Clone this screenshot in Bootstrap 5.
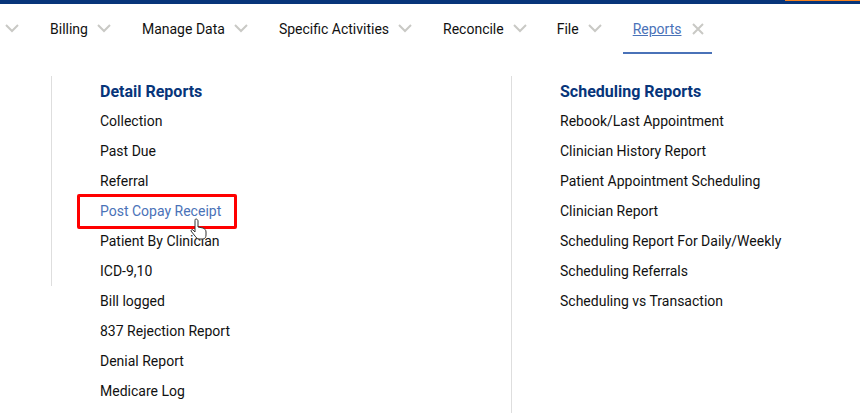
<!DOCTYPE html>
<html lang="en"><head><meta charset="utf-8">
<link href="https://cdn.jsdelivr.net/npm/bootstrap@5.3.0/dist/css/bootstrap.min.css" rel="stylesheet">
<style>
html,body{height:413px;overflow:hidden;background:#fff}
body{font-family:Roboto,"Liberation Sans",sans-serif;font-size:14px;color:#111}
.topstrip{height:4px;background:#07357a;position:relative}
.topaccent{position:absolute;right:0;top:0;width:75px;height:1px;background:#f58220}
.menubar{height:49px;padding-left:5px}
.menuitem{height:49px;color:#111;text-decoration:none;font-size:14px;line-height:20px;padding-top:15px;gap:9px}
.menuitem.first{margin-right:31px}
.mi-1{margin-right:31px}.mi-2{margin-right:31px}.mi-3{margin-right:31px}.mi-4{margin-right:30px}.mi-5{margin-right:31px}
.menuitem.active{color:#4a72b8;text-decoration:underline;border-bottom:2px solid #4a72b8;height:50px;padding-left:10px;padding-right:8px;margin-left:-10px;gap:11px}
.chev{width:14px;height:9px;flex:none;margin-top:5px}
.closex{width:12px;height:12px;flex:none;margin-top:4px}
.colA{width:411px;margin-left:48px;flex:none}
.colB{flex:none;width:300px;margin-left:48px}
.divA{border-left:1px solid #dedede;height:210px;margin-top:23px;margin-left:51px;flex:none;width:1px}
.divB{border-left:1px solid #dedede;height:337px;margin-top:23px;flex:none;width:1px}
.heading{font-size:16px;font-weight:700;color:#07357a;line-height:20px;margin:0 0 4px;padding-top:29px}
.rlist{list-style:none;margin:0;padding:0}
.rlist li{height:30px;line-height:30px;white-space:nowrap;font-size:14px;color:#111}
.rlist .hot{color:#4a72b8}
.hilite{position:absolute;left:77px;top:141px;width:160px;height:35px;border:3px solid #f00;border-radius:2px}
.cursor{position:absolute;left:190px;top:165px;width:18px;height:22px}
</style></head><body>
<div class="topstrip"><div class="topaccent"></div></div>
<nav class="menubar d-flex">
<a class="menuitem first d-flex" href="#"><svg class="chev" viewBox="0 0 14 9"><path d="M1 1l6 6 6-6" fill="none" stroke="#c9c9c5" stroke-width="2"/></svg></a>
<a class="menuitem mi-1 d-flex" href="#">Billing<svg class="chev" viewBox="0 0 14 9"><path d="M1 1l6 6 6-6" fill="none" stroke="#c9c9c5" stroke-width="2"/></svg></a>
<a class="menuitem mi-2 d-flex" href="#">Manage Data<svg class="chev" viewBox="0 0 14 9"><path d="M1 1l6 6 6-6" fill="none" stroke="#c9c9c5" stroke-width="2"/></svg></a>
<a class="menuitem mi-3 d-flex" href="#">Specific Activities<svg class="chev" viewBox="0 0 14 9"><path d="M1 1l6 6 6-6" fill="none" stroke="#c9c9c5" stroke-width="2"/></svg></a>
<a class="menuitem mi-4 d-flex" href="#">Reconcile<svg class="chev" viewBox="0 0 14 9"><path d="M1 1l6 6 6-6" fill="none" stroke="#c9c9c5" stroke-width="2"/></svg></a>
<a class="menuitem mi-5 d-flex" href="#">File<svg class="chev" viewBox="0 0 14 9"><path d="M1 1l6 6 6-6" fill="none" stroke="#c9c9c5" stroke-width="2"/></svg></a>
<a class="menuitem active d-flex align-self-start" href="#">Reports<svg class="closex" viewBox="0 0 12 12"><path d="M1 1l10 10M11 1L1 11" fill="none" stroke="#c9c9c5" stroke-width="2"/></svg></a>
</nav>
<div class="position-relative d-flex">
<div class="divA"></div>
<div class="colA">
<h2 class="heading">Detail Reports</h2>
<ul class="rlist">
<li>Collection</li><li>Past Due</li><li>Referral</li><li class="hot">Post Copay Receipt</li><li>Patient By Clinician</li><li>ICD-9,10</li><li>Bill logged</li><li>837 Rejection Report</li><li>Denial Report</li><li>Medicare Log</li>
</ul></div>
<div class="divB"></div>
<div class="colB">
<h2 class="heading">Scheduling Reports</h2>
<ul class="rlist">
<li>Rebook/Last Appointment</li><li>Clinician History Report</li><li>Patient Appointment Scheduling</li><li>Clinician Report</li><li>Scheduling Report For Daily/Weekly</li><li>Scheduling Referrals</li><li>Scheduling vs Transaction</li>
</ul></div>
<div class="hilite"></div>
<svg class="cursor" viewBox="0 0 18 22"><path d="M6 1c1 0 2 1 2 2v6l5 1c2 1 3 2 3 4v3c0 2-1 4-3 4H9c-2 0-3-2-4-3l-4-5c0-1 1-2 2-1l2 2V3c0-1 0-2 1-2z" fill="#fff" stroke="#333" stroke-width="1"/></svg>
</div>
</body></html>
